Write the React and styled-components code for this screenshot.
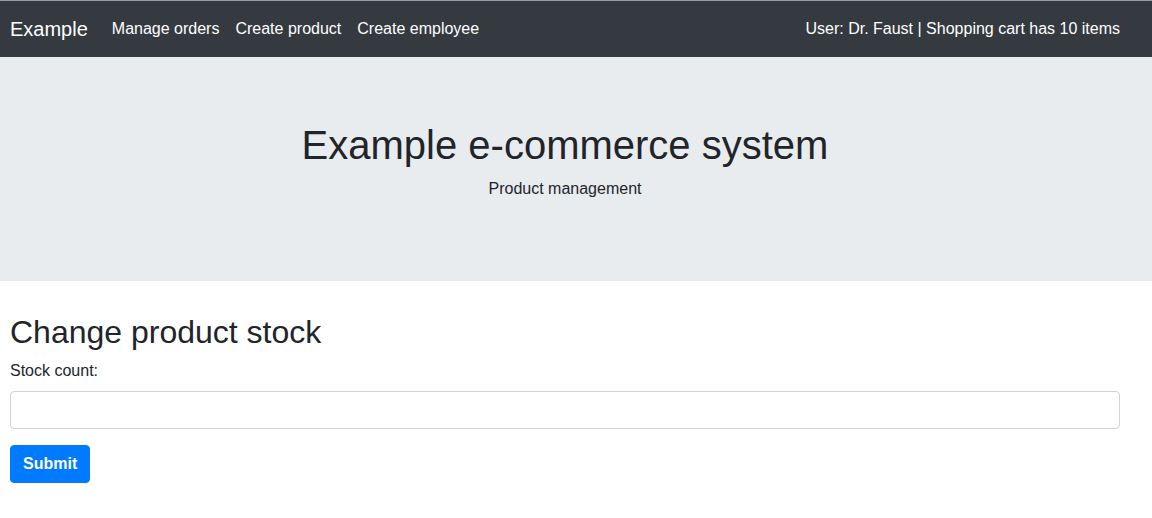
import React from 'react';
import styled, { createGlobalStyle } from 'styled-components';

const GlobalStyle = createGlobalStyle`
  body {
    margin: 0;
    font-family: "Liberation Sans", Arial, sans-serif;
    font-size: 16px;
    line-height: 1.5;
    color: #212529;
    background: #fff;
  }
`

const NavBar = styled.nav`
  display: flex;
  align-items: center;
  height: 56px;
  padding: 0 32px 0 10px;
  background: #343a40;
  border-top: 1px solid #9a9c9e;
  color: #fff;
`

const Brand = styled.a`
  font-size: 20px;
  line-height: 30px;
  margin-right: 16px;
  color: #fff;
  text-decoration: none;
`

const NavLinks = styled.div`
  display: flex;
  flex: 1;
`

const NavLink = styled.a`
  padding: 8px;
  color: #fff;
  text-decoration: none;
`

const NavText = styled.span`
  color: #fff;
`

const Jumbotron = styled.header`
  background: #e9ecef;
  padding: 64px 32px 64px 10px;
  margin-bottom: 32px;
  text-align: center;

  h1 {
    font-size: 40px;
    font-weight: 400;
    line-height: 48px;
    margin: 0 0 8px;
  }

  p {
    margin: 0 0 16px;
  }
`

const Content = styled.main`
  padding: 0 32px 0 10px;

  h2 {
    font-size: 32px;
    font-weight: 400;
    line-height: 38px;
    margin: 0 0 8px;
  }
`

const FormGroup = styled.div`
  margin-bottom: 16px;

  label {
    display: block;
    margin-bottom: 8px;
  }
`

const Input = styled.input`
  display: block;
  box-sizing: border-box;
  width: 100%;
  height: 38px;
  padding: 6px 12px;
  font: inherit;
  border: 1px solid #ced4da;
  border-radius: 4px;
`

const Button = styled.button`
  height: 38px;
  padding: 6px 12px;
  font-family: inherit;
  font-size: 16px;
  font-weight: 700;
  color: #fff;
  background: #007bff;
  border: 1px solid #007bff;
  border-radius: 4px;
`

export default function App() {
  return <>
    <GlobalStyle />
    <NavBar>
      <Brand href="#">Example</Brand>
      <NavLinks>
        <NavLink href="#">Manage orders</NavLink>
        <NavLink href="#">Create product</NavLink>
        <NavLink href="#">Create employee</NavLink>
      </NavLinks>
      <NavText>User: Dr. Faust | Shopping cart has 10 items</NavText>
    </NavBar>
    <Jumbotron>
      <h1>Example e-commerce system</h1>
      <p>Product management</p>
    </Jumbotron>
    <Content>
      <h2>Change product stock</h2>
      <form onSubmit={e => e.preventDefault()}>
        <FormGroup>
          <label htmlFor="stock">Stock count:</label>
          <Input id="stock" type="text" />
        </FormGroup>
        <Button type="submit">Submit</Button>
      </form>
    </Content>
  </>;
}
